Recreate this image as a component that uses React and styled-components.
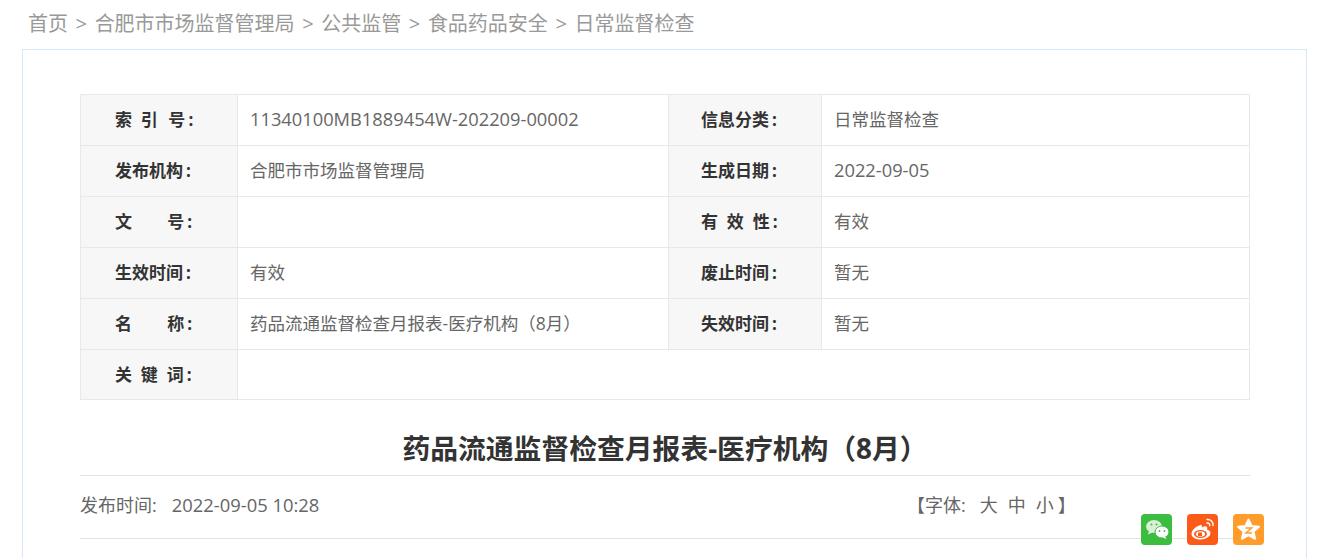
import React from "react";
import styled, { createGlobalStyle } from "styled-components";

const Global = createGlobalStyle`
  html, body { margin: 0; padding: 0; background: #fff; height: 558px; overflow: hidden; }
  body { font-family: "Open Sans", "Noto Sans CJK SC", sans-serif; }
  * { box-sizing: border-box; }
`;
const Page = styled.div`
  width: 1326px;
  height: 558px;
  overflow: hidden;
  position: relative;
  padding: 0 19px 0 22px;
`;
const Crumbs = styled.nav`
  height: 49px;
  padding: 6px 0 0 6px;
  display: flex;
  gap: 7.6px;
  font-size: 20px;
  line-height: 36px;
  color: #999;
`;
const Panel = styled.main`
  border: 1px solid #d5e8f8;
  border-bottom: 0;
  height: 520px;
  padding: 44px 57px 0 57px;
`;
const Table = styled.div`
  display: grid;
  grid-template-columns: 157px 431px 153px 1fr;
  grid-template-rows: repeat(5, 51px) 50px;
  border-top: 1px solid #e8e8e8;
  border-left: 1px solid #e8e8e8;
  width: 1170px;
`;
const Label = styled.div`
  background: #f7f7f7;
  border-right: 1px solid #e8e8e8;
  border-bottom: 1px solid #e8e8e8;
  padding-left: ${(p) => p.$pad || 34}px;
  font-size: 17px;
  font-weight: 700;
  color: #333;
  line-height: 49px;
  white-space: pre;
`;
const Colon = styled.span`
  margin-left: 3px;
`;
const Value = styled.div`
  grid-column: span ${(p) => p.$span || 1};
  border-right: 1px solid #e8e8e8;
  border-bottom: 1px solid #e8e8e8;
  padding-left: 12px;
  font-size: ${(p) => (p.$latin ? 18.3 : 17.5)}px;
  color: #666;
  line-height: 48px;
  white-space: pre;
`;
const Title = styled.h1`
  margin: 0;
  width: 1170px;
  height: 76px;
  padding-top: 26px;
  border-bottom: 1px solid #dfe3ea;
  text-align: center;
  font-size: 27.8px;
  line-height: 44px;
  font-weight: 700;
  color: #333;
`;
const Meta = styled.div`
  width: 1170px;
  height: 63px;
  border-bottom: 1px solid #dfe3ea;
  display: flex;
  font-size: 18px;
  line-height: 58px;
  color: #666;
`;
const Published = styled.span`
  flex: 1;
  display: flex;
  gap: 15px;
  white-space: pre;
`;
const PublishedAt = styled.span`
  font-size: 18.4px;
`;
const FontSize = styled.div`
  width: 343px;
  display: flex;
  gap: 10px;
  white-space: pre;
`;
const FontLead = styled.span`
  margin-right: 4px;
`;
const FontClose = styled.span`
  margin-left: -6px;
`;
const Share = styled.div`
  position: absolute;
  left: 1141px;
  top: 514px;
  display: flex;
  gap: 15px;
`;
const ShareIcon = styled.a`
  display: block;
  width: 31px;
  height: 31px;
  border-radius: 4px;
  background: ${(p) => p.$bg};
`;

const rows = [
  ["索  引\u200a  号", "11340100MB1889454W-202209-00002", true, "信息分类", "日常监督检查", false],
  ["发布机构", "合肥市市场监督管理局", false, "生成日期", "2022-09-05", true],
  ["文        号", "", false, "有  效  性", "有效", false],
  ["生效时间", "有效", false, "废止时间", "暂无", false],
  ["名        称", "药品流通监督检查月报表-医疗机构（8月）", false, "失效时间", "暂无", false],
];

const Svg = ({ children }) => (
  <svg width="31" height="31" viewBox="0 0 31 31">{children}</svg>
);

export default function App() {
  return (
    <Page>
      <Global />
      <Crumbs>
        <span>首页</span><span>&gt;</span>
        <span>合肥市市场监督管理局</span><span>&gt;</span>
        <span>公共监管</span><span>&gt;</span>
        <span>食品药品安全</span><span>&gt;</span>
        <span>日常监督检查</span>
      </Crumbs>
      <Panel>
        <Table>
          {rows.map((r) => (
            <React.Fragment key={r[0]}>
              <Label>{r[0]}<Colon>:</Colon></Label>
              <Value $latin={r[2]}>{r[1]}</Value>
              <Label $pad={32}>{r[3]}<Colon>:</Colon></Label>
              <Value $latin={r[5]}>{r[4]}</Value>
            </React.Fragment>
          ))}
          <Label>关  键  词<Colon>:</Colon></Label>
          <Value $span={3} />
        </Table>
        <Title>药品流通监督检查月报表-医疗机构（8月）</Title>
        <Meta>
          <Published>
            <span>发布时间:</span>
            <PublishedAt>2022-09-05 10:28</PublishedAt>
          </Published>
          <FontSize>
            <FontLead>【字体:</FontLead>
            <span>大</span><span>中</span><span>小</span>
            <FontClose>】</FontClose>
          </FontSize>
        </Meta>
      </Panel>
      <Share>
        <ShareIcon $bg="#3cbd40">
          <Svg>
            <ellipse cx="13" cy="12.5" rx="8" ry="6.500" fill="#d8f0d8" />
            <path d="M8 17l-1 3.500 4.500-2z" fill="#d8f0d8" />
            <ellipse cx="21" cy="18" rx="7" ry="6" fill="#fff" stroke="#3cbd40" strokeWidth="1" />
            <path d="M24 22.500l1.500 2.500-4-1.500z" fill="#fff" />
            <circle cx="10.500" cy="10.500" r="1" fill="#3cbd40" />
            <circle cx="15.500" cy="10.500" r="1" fill="#3cbd40" />
            <circle cx="18.500" cy="17" r=".9" fill="#3cbd40" />
            <circle cx="23.500" cy="17" r=".9" fill="#3cbd40" />
          </Svg>
        </ShareIcon>
        <ShareIcon $bg="#fc5a17">
          <Svg>
            <path d="M13.500 11c-5 1.500-9 5.500-9 9 0 3.500 4.500 5.500 9 5.500 5.500 0 10-3 10-6.500 0-2-2-3-3.500-3.300 1-2.500-.5-4-3-3.200l-2.200.9c.5-2-.3-3-1.300-2.400z" fill="#fff" />
            <ellipse cx="13.500" cy="20" rx="6.500" ry="4" fill="#fc5a17" />
            <ellipse cx="13.500" cy="20" rx="4.500" ry="2.800" fill="#fff" />
            <rect x="11" y="18.500" width="4" height="3.500" fill="#fc5a17" />
            <path d="M20 5.500c3.500-.5 6.500 2.500 6 6M20 9c1.500-.3 3 1 2.700 2.700" stroke="#fff" strokeWidth="1.400" fill="none" strokeLinecap="round" />
          </Svg>
        </ShareIcon>
        <ShareIcon $bg="#ff9c2b">
          <Svg>
            <path d="M15.500 5.500l3 6.500 7.500.8-5.500 4.800 1.600 7.200-6.600-3.600-6.600 3.600 1.600-7.200-5.500-4.800 7.500-.8z" fill="#fff" stroke="#fff" strokeWidth="2" strokeLinejoin="round" />
            <path d="M12.500 14h6l-5.500 5h6" stroke="#ff9c2b" strokeWidth="1.500" fill="none" />
          </Svg>
        </ShareIcon>
      </Share>
    </Page>
  );
}
